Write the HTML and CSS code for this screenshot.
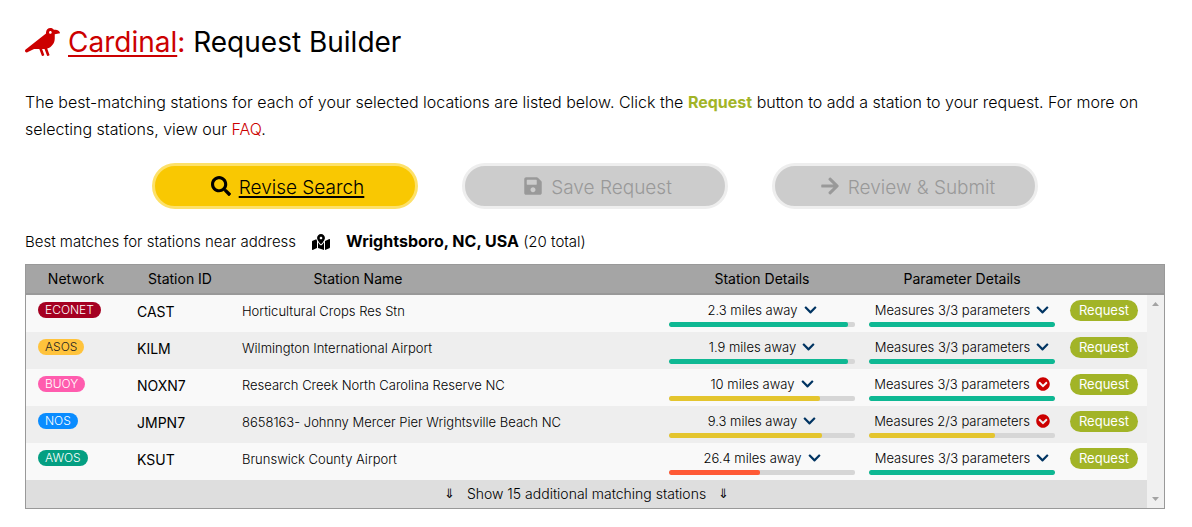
FILE: index.html
```html
<!DOCTYPE html>
<html lang="en">
<head>
<meta charset="utf-8">
<title>Cardinal: Request Builder</title>
<link rel="stylesheet" href="styles.css">
</head>
<body>
<svg class="sprite" aria-hidden="true">
  <symbol id="crow" viewBox="0 0 640 512"><path d="M544 32h-16.36C513.04 12.68 490.09 0 464 0c-44.18 0-80 35.82-80 80v20.98L12.09 393.57A30.216 30.216 0 0 0 0 417.74c0 22.46 23.64 37.07 43.73 27.03L165.27 384h96.49l44.41 120.1c2.27 6.23 9.15 9.44 15.38 7.17l22.55-8.21c6.23-2.27 9.44-9.15 7.17-15.38L312.94 384H352c1.91 0 3.76-.23 5.66-.29l44.51 120.38c2.27 6.23 9.15 9.44 15.38 7.17l22.55-8.21c6.23-2.27 9.44-9.15 7.17-15.38l-41.24-111.54C485.74 352.8 544 279.26 544 192v-80l96-16c0-35.35-42.98-64-96-64zm-80 72c-13.25 0-24-10.75-24-24 0-13.26 10.75-24 24-24s24 10.74 24 24c0 13.25-10.75 24-24 24z"/></symbol>
  <symbol id="search" viewBox="0 0 512 512"><path d="M505 442.7L405.3 343c-4.5-4.5-10.6-7-17-7H372c27.6-35.3 44-79.7 44-128C416 93.1 322.9 0 208 0S0 93.1 0 208s93.1 208 208 208c48.3 0 92.7-16.4 128-44v16.3c0 6.4 2.5 12.5 7 17l99.7 99.7c9.4 9.4 24.6 9.4 33.9 0l28.3-28.3c9.4-9.4 9.4-24.6.1-34zM208 336c-70.7 0-128-57.2-128-128 0-70.7 57.2-128 128-128 70.7 0 128 57.2 128 128 0 70.7-57.2 128-128 128z"/></symbol>
  <symbol id="save" viewBox="0 0 448 512"><path d="M433.941 129.941l-83.882-83.882A48 48 0 0 0 316.118 32H48C21.49 32 0 53.49 0 80v352c0 26.51 21.49 48 48 48h352c26.51 0 48-21.49 48-48V163.882a48 48 0 0 0-14.059-33.941zM224 416c-35.346 0-64-28.654-64-64 0-35.346 28.654-64 64-64s64 28.654 64 64c0 35.346-28.654 64-64 64zm96-304.52V212c0 6.627-5.373 12-12 12H76c-6.627 0-12-5.373-12-12V108c0-6.627 5.373-12 12-12h228.52c3.183 0 6.235 1.264 8.485 3.515l3.48 3.48A11.996 11.996 0 0 1 320 111.48z"/></symbol>
  <symbol id="arrow" viewBox="0 0 448 512"><path d="M190.5 66.9l22.2-22.2c9.4-9.4 24.6-9.4 33.9 0L441 239c9.4 9.4 9.4 24.6 0 33.9L246.6 467.3c-9.4 9.4-24.6 9.4-33.9 0l-22.2-22.2c-9.5-9.5-9.3-25 .4-34.3L311.4 296H24c-13.3 0-24-10.7-24-24v-32c0-13.3 10.7-24 24-24h287.4L190.9 101.2c-9.8-9.3-10-24.8-.4-34.3z"/></symbol>
  <symbol id="map" viewBox="0 0 576 512"><path d="M288 0c-69.59 0-126 56.41-126 126 0 56.26 82.35 158.8 113.9 196.02 6.39 7.54 17.82 7.54 24.2 0C331.65 284.8 414 182.26 414 126 414 56.41 357.59 0 288 0zm0 168c-23.2 0-42-18.8-42-42s18.8-42 42-42 42 18.8 42 42-18.8 42-42 42zM20.12 215.95A32.006 32.006 0 0 0 0 245.66v250.32c0 11.32 11.43 19.06 21.94 14.86L160 448V214.92c-8.84-15.98-16.07-31.54-21.25-46.42L20.12 215.95zM288 359.67c-14.07 0-27.38-6.18-36.51-16.96-19.66-23.2-40.57-49.62-59.49-76.72v182l192 64V266c-18.92 27.09-39.82 53.52-59.49 76.72-9.13 10.77-22.44 16.95-36.51 16.95zm266.06-198.51L416 224v288l139.88-55.95A31.996 31.996 0 0 0 576 426.34V176.02c0-11.32-11.43-19.06-21.94-14.86z"/></symbol>
  <symbol id="chevron" viewBox="0 0 448 512"><path d="M207.029 381.476L12.686 187.132c-9.373-9.373-9.373-24.569 0-33.941l22.667-22.667c9.357-9.357 24.522-9.375 33.901-.04L224 284.505l154.745-154.021c9.379-9.335 24.544-9.317 33.901.04l22.667 22.667c9.373 9.373 9.373 24.569 0 33.941L240.971 381.476c-9.373 9.372-24.569 9.372-33.942 0z"/></symbol>
  <symbol id="chevron-circle" viewBox="0 0 512 512"><path d="M504 256c0 137-111 248-248 248S8 393 8 256 119 8 256 8s248 111 248 248zM273 369.9l135.5-135.5c9.4-9.4 9.4-24.6 0-33.9l-17-17c-9.4-9.4-24.6-9.4-33.9 0L256 285.1 154.4 183.5c-9.4-9.4-24.6-9.4-33.9 0l-17 17c-9.4 9.4-9.4 24.6 0 33.9L239 369.9c9.4 9.4 24.6 9.4 34 0z"/></symbol>
</svg>

<main class="page">
  <h1 class="title">
    <svg class="title-icon" aria-hidden="true"><use href="#crow"/></svg>
    <span><span class="brand"><a href="#cardinal">Cardinal</a>:</span> Request Builder</span>
  </h1>

  <p class="intro">The best-matching stations for each of your selected locations are listed below. Click the <strong>Request</strong> button to add a station to your request. For more on selecting stations, view our <a href="#faq">FAQ</a>.</p>

  <nav class="actions">
    <a class="action action-primary" href="#search"><svg class="action-icon" aria-hidden="true"><use href="#search"/></svg><span>Revise Search</span></a>
    <button class="action" type="button" disabled><svg class="action-icon" aria-hidden="true"><use href="#save"/></svg><span>Save Request</span></button>
    <button class="action" type="button" disabled><svg class="action-icon" aria-hidden="true"><use href="#arrow"/></svg><span>Review &amp; Submit</span></button>
  </nav>

  <p class="summary"><span>Best matches for stations near address</span><svg class="summary-icon" aria-hidden="true"><use href="#map"/></svg><span><strong>Wrightsboro, NC, USA</strong> (20 total)</span></p>

  <table class="stations">
    <colgroup><col class="col-network"><col class="col-id"><col><col class="col-details"><col class="col-details"><col class="col-request"><col class="col-scroll"></colgroup>
    <thead>
      <tr><th>Network</th><th>Station ID</th><th class="head-name">Station Name</th><th>Station Details</th><th>Parameter Details</th><th></th><th></th></tr>
    </thead>
    <tbody>
      <tr>
        <td><span class="badge econet">ECONET</span></td><td class="station-id">CAST</td><td class="name">Horticultural Crops Res Stn</td>
        <td><button class="detail" type="button">2.3 miles away<svg class="chevron" aria-hidden="true"><use href="#chevron"/></svg></button><div class="bar"><div class="fill good" style="width:96%"></div></div></td>
        <td><button class="detail" type="button">Measures 3/3 parameters<svg class="chevron" aria-hidden="true"><use href="#chevron"/></svg></button><div class="bar"><div class="fill good" style="width:100%"></div></div></td>
        <td><button class="request" type="button">Request</button></td>
        <td class="scroll scroll-top" rowspan="5"><div class="scroll-up"></div></td>
      </tr>
      <tr>
        <td><span class="badge asos">ASOS</span></td><td class="station-id">KILM</td><td class="name">Wilmington International Airport</td>
        <td><button class="detail" type="button">1.9 miles away<svg class="chevron" aria-hidden="true"><use href="#chevron"/></svg></button><div class="bar"><div class="fill good" style="width:96%"></div></div></td>
        <td><button class="detail" type="button">Measures 3/3 parameters<svg class="chevron" aria-hidden="true"><use href="#chevron"/></svg></button><div class="bar"><div class="fill good" style="width:100%"></div></div></td>
        <td><button class="request" type="button">Request</button></td>
      </tr>
      <tr>
        <td><span class="badge buoy">BUOY</span></td><td class="station-id">NOXN7</td><td class="name">Research Creek North Carolina Reserve NC</td>
        <td><button class="detail" type="button">10 miles away<svg class="chevron" aria-hidden="true"><use href="#chevron"/></svg></button><div class="bar"><div class="fill fair" style="width:81%"></div></div></td>
        <td><button class="detail" type="button">Measures 3/3 parameters<svg class="chevron alert" aria-hidden="true"><use href="#chevron-circle"/></svg></button><div class="bar"><div class="fill good" style="width:100%"></div></div></td>
        <td><button class="request" type="button">Request</button></td>
      </tr>
      <tr>
        <td><span class="badge nos">NOS</span></td><td class="station-id">JMPN7</td><td class="name">8658163- Johnny Mercer Pier Wrightsville Beach NC</td>
        <td><button class="detail" type="button">9.3 miles away<svg class="chevron" aria-hidden="true"><use href="#chevron"/></svg></button><div class="bar"><div class="fill fair" style="width:82%"></div></div></td>
        <td><button class="detail" type="button">Measures 2/3 parameters<svg class="chevron alert" aria-hidden="true"><use href="#chevron-circle"/></svg></button><div class="bar"><div class="fill fair" style="width:68%"></div></div></td>
        <td><button class="request" type="button">Request</button></td>
      </tr>
      <tr>
        <td><span class="badge awos">AWOS</span></td><td class="station-id">KSUT</td><td class="name">Brunswick County Airport</td>
        <td><button class="detail" type="button">26.4 miles away<svg class="chevron" aria-hidden="true"><use href="#chevron"/></svg></button><div class="bar"><div class="fill poor" style="width:49%"></div></div></td>
        <td><button class="detail" type="button">Measures 3/3 parameters<svg class="chevron" aria-hidden="true"><use href="#chevron"/></svg></button><div class="bar"><div class="fill good" style="width:100%"></div></div></td>
        <td><button class="request" type="button">Request</button></td>
      </tr>
    </tbody>
    <tfoot>
      <tr><td colspan="6"><button class="more" type="button"><span class="down">⇓</span><span>Show 15 additional matching stations</span><span class="down">⇓</span></button></td><td class="scroll scroll-bottom"><div class="scroll-down"></div></td></tr>
    </tfoot>
  </table>
</main>
</body>
</html>
```
FILE: styles.css
```css
* { box-sizing: border-box; }

body {
  margin: 0;
  background: #fff;
  color: #000;
  font-family: Inter, "Liberation Sans", sans-serif;
  font-size: 16px;
  font-weight: 300;
}

button { font: inherit; color: inherit; border: 0; background: none; padding: 0; }
svg { fill: currentColor; }
.sprite { display: none; }

.page { padding: 25px 27px 18px 25px; }

.title {
  display: flex;
  align-items: center;
  gap: 8px;
  margin: 0;
  font-size: 28px;
  line-height: 34px;
  font-weight: 400;
}
.title-icon { width: 35px; height: 28px; color: #c00; }
.brand, .brand a, .intro a { color: #c00; }
.brand a { text-decoration-thickness: 2px; text-underline-offset: 3px; }

.intro { margin: 30px 0 0; line-height: 27px; }
.intro strong { color: #a2b427; font-weight: 700; }
.intro a { text-decoration: none; }

.actions { display: flex; justify-content: center; gap: 44px; margin-top: 20px; }
.action {
  display: flex;
  flex: 0 1 266px;
  align-items: center;
  justify-content: center;
  gap: 8px;
  height: 46px;
  padding-left: 5px;
  border: 3px solid #eee;
  border-radius: 23px;
  background: #ccc;
  color: #999;
  font-size: 19px;
}
.action span { padding-top: 2px; }
.action-primary { border-color: #fde16a; background: #f9c802; color: #000; }
.action-primary { text-decoration-thickness: 2px; text-underline-offset: 2px; }
.action-icon { width: 20px; height: 20px; }

.summary {
  display: flex;
  align-items: center;
  gap: 16px;
  margin: 19px 0 9px;
  font-size: 15px;
  line-height: 26px;
}
.summary-icon { width: 18px; height: 16px; }
.summary strong { font-size: 16px; font-weight: 700; }

.stations {
  width: 100%;
  table-layout: fixed;
  border-collapse: separate;
  border-spacing: 0;
  border: 1px solid #999;
  font-size: 14px;
}
.stations th, .stations td { padding: 0; text-align: left; }
.stations th {
  height: 30px;
  padding-bottom: 2px;
  border-bottom: 2px solid #999;
  background: #a5a5a5;
  font-weight: 400;
  text-align: center;
}
.stations .head-name { padding-right: 180px; }
.col-network { width: 100px; }
.col-id { width: 108px; }
.col-details { width: 200px; }
.col-request { width: 85px; }
.col-scroll { width: 17px; }

tbody tr { height: 37px; background: #f9f9f9; }
tbody tr:nth-child(even) { background: #eee; }
.stations td { vertical-align: middle; }
.stations td:first-child:not([colspan]) { padding-left: 12px; }
.stations .station-id { padding: 0 0 5px 11px; font-weight: 400; }
.stations .name { padding: 0 0 5px 8px; font-size: 13px; }

.badge {
  display: block;
  width: fit-content;
  margin-bottom: 7px;
  padding: 0 7px;
  border-radius: 8px;
  color: #fff;
  font-size: 12px;
  line-height: 16px;
}
.econet { background: #a50021; }
.asos { background: #ffc33c; color: #222; }
.buoy { background: #ff5cae; }
.nos { background: #0a8cff; }
.awos { background: #049f82; }

.detail {
  display: flex;
  align-items: center;
  justify-content: center;
  gap: 6px;
  width: 100%;
  font-size: 13px;
  line-height: 18px;
}
.chevron { width: 13px; height: 14px; color: #003462; }
.alert { width: 14px; color: #c00; }
.bar { height: 5px; margin: 3px 7px 0; border-radius: 2px; background: #d6d6d6; overflow: hidden; }
.fill { height: 5px; border-radius: 2px; }
.good { background: #0eb893; }
.fair { background: #e4c52e; }
.poor { background: #ff5a36; }

.request {
  display: block;
  width: 68px;
  margin: 0 0 6px 8px;
  border-radius: 11px;
  background: #a2b427;
  color: #fff;
  font-size: 13px;
  line-height: 21px;
  font-weight: 400;
}

tfoot td { height: 28px; background: #dedede; }
.more { display: flex; align-items: center; justify-content: center; gap: 12px; width: 100%; line-height: 18px; }
.down { font-family: "DejaVu Sans", sans-serif; font-size: 13px; }

.stations .scroll { background: #f0f0f0; }
.stations .scroll-top { padding: 7px 0 0 5px; vertical-align: top; }
.stations .scroll-bottom { padding: 0 0 7px 5px; vertical-align: bottom; }
.scroll-up, .scroll-down { width: 7px; height: 4px; background: #a3a3a3; }
.scroll-up { clip-path: polygon(50% 0, 100% 100%, 0 100%); }
.scroll-down { clip-path: polygon(0 0, 100% 0, 50% 100%); }
```
